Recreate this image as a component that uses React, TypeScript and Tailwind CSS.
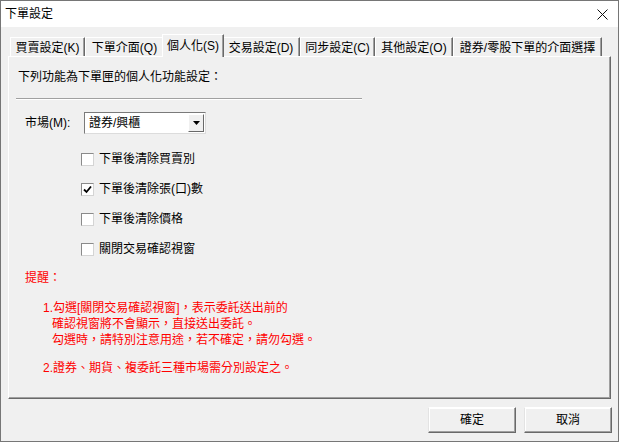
const tabs = [
  { label: "買賣設定(K)", w: "w-[75px]" },
  { label: "下單介面(Q)", w: "w-[79px]" },
  { label: "個人化(S)", w: "w-[62px]", active: true },
  { label: "交易設定(D)", w: "w-[78px]" },
  { label: "同步設定(C)", w: "w-[75px]" },
  { label: "其他設定(O)", w: "w-[78px]" },
  { label: "證券/零股下單的介面選擇", w: "w-[149px]" },
];

const options = [
  { label: "下單後清除買賣別", checked: false },
  { label: "下單後清除張(口)數", checked: true },
  { label: "下單後清除價格", checked: false },
  { label: "關閉交易確認視窗", checked: false },
];

function Checkbox({ checked }: { checked: boolean }) {
  return (
    <div className="w-[13px] h-[13px] bg-white border border-[#8a8a8a] border-r-[#d4d4d4] border-b-[#d4d4d4] flex items-center justify-center shrink-0">
      {checked && (
        <svg width="9" height="9" viewBox="0 0 9 9">
          <path d="M1 4.5 L3.5 7 L8 1.5" stroke="#000" strokeWidth="1.8" fill="none" />
        </svg>
      )}
    </div>
  );
}

function Button({ children }: { children: string }) {
  return (
    <button className="w-[88px] h-[26px] bg-[#f0f0f0] border border-t-white border-l-[#e3e3e3] border-r-[#696969] border-b-[#696969] shadow-[inset_-1px_-1px_#a0a0a0,inset_1px_1px_#fff] text-[12px] leading-[16px] text-black">
      {children}
    </button>
  );
}

export default function App() {
  return (
    <div className="w-[619px] h-[442px] bg-[#f0f0f0] border border-[#767676] flex flex-col font-['Liberation_Sans','Noto_Sans_CJK_TC',sans-serif] text-[12px] leading-[16px] text-black select-none">
      {/* title bar */}
      <div className="h-[26px] bg-white flex items-center justify-between pl-[4px] pr-[10px] shrink-0">
        <span className="text-[12px]">下單設定</span>
        <svg width="11" height="11" viewBox="0 0 11 11">
          <path d="M0.5 0.5 L10.5 10.5 M10.5 0.5 L0.5 10.5" stroke="#111" strokeWidth="1" />
        </svg>
      </div>

      {/* tabs */}
      <div className="pt-[7px] pl-[9px] h-[29px] shrink-0">
        <div className="h-[22px] flex items-end">
          {tabs.map((t) =>
            t.active ? (
              <div
                key={t.label}
                className={`${t.w} h-[23px] -mb-[1px] -mx-[2px] relative z-10 bg-[#f0f0f0] border-t border-l border-white border-r border-r-[#696969] shadow-[inset_-1px_0_#a0a0a0] flex items-start justify-center pt-[3px]`}
              >
                {t.label}
              </div>
            ) : (
              <div
                key={t.label}
                className={`${t.w} h-[19px] bg-[#f0f0f0] border-t border-l border-white border-r border-r-[#696969] shadow-[inset_-1px_0_#a0a0a0] flex items-start justify-center pt-[2px]`}
              >
                {t.label}
              </div>
            )
          )}
        </div>
      </div>

      {/* tab panel */}
      <div className="mx-[7px] h-[343px] border-t border-l border-white border-r border-b border-r-[#696969] border-b-[#696969] shadow-[inset_-1px_-1px_#a0a0a0] flex flex-col shrink-0">
        <div className="mt-[12px] ml-[9px] h-[16px]">下列功能為下單匣的個人化功能設定：</div>
        <div className="mt-[13px] ml-[7px] w-[346px] h-[2px] border-t border-[#a0a0a0] border-b border-b-white"></div>

        <div className="mt-[12px] ml-[16px] h-[22px] flex items-center">
          <span className="w-[59px]">市場(M):</span>
          <div className="w-[122px] h-[22px] bg-white border border-[#7a7a7a] border-r-[#dcdcdc] border-b-[#dcdcdc] flex items-center">
            <span className="flex-1 pl-[4px]">證券/興櫃</span>
            <div className="w-[16px] h-[18px] mr-[1px] bg-[#f0f0f0] border border-t-white border-l-white border-r-[#696969] border-b-[#696969] flex items-center justify-center">
              <svg width="7" height="4" viewBox="0 0 7 4">
                <path d="M0 0 H7 L3.5 4 Z" fill="#000" />
              </svg>
            </div>
          </div>
        </div>

        <div className="mt-[17px] ml-[72px] flex flex-col gap-[14px]">
          {options.map((o) => (
            <div key={o.label} className="h-[16px] flex items-center gap-[5px]">
              <Checkbox checked={o.checked} />
              <span>{o.label}</span>
            </div>
          ))}
        </div>

        <div className="mt-[13px] ml-[16px] text-[#ff0000]">提醒：</div>
        <div className="mt-[14px] ml-[34px] text-[#ff0000]">1.勾選[關閉交易確認視窗]，表示委託送出前的</div>
        <div className="ml-[43px] text-[#ff0000]">確認視窗將不會顯示，直接送出委託。</div>
        <div className="ml-[43px] text-[#ff0000]">勾選時，請特別注意用途，若不確定，請勿勾選。</div>
        <div className="mt-[12px] ml-[34px] text-[#ff0000]">2.證券、期貨、複委託三種市場需分別設定之。</div>
      </div>

      {/* buttons */}
      <div className="mt-[8px] pr-[6px] flex justify-end gap-[8px]">
        <Button>確定</Button>
        <Button>取消</Button>
      </div>
    </div>
  );
}
